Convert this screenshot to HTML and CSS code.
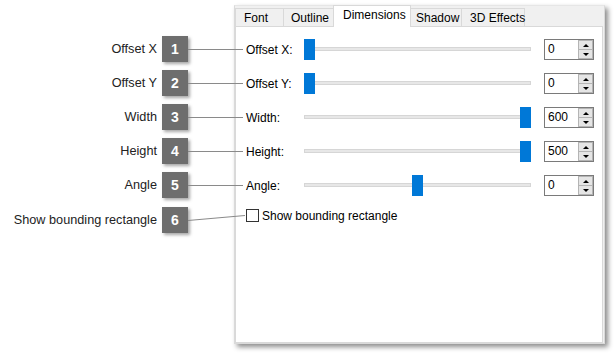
FILE: index.html
```html
<!DOCTYPE html>
<html lang="en">
<head>
    <meta charset="UTF-8">
    <title>Text Properties - Dimensions</title>
    <link rel="stylesheet" href="styles.css">
</head>
<body>
    <div class="page">
        <div class="callouts">
            <div class="callout">
                <span class="callout-label">Offset X</span>
                <span class="badge">1</span>
                <span class="leader"></span>
            </div>
            <div class="callout">
                <span class="callout-label">Offset Y</span>
                <span class="badge">2</span>
                <span class="leader"></span>
            </div>
            <div class="callout">
                <span class="callout-label">Width</span>
                <span class="badge">3</span>
                <span class="leader"></span>
            </div>
            <div class="callout">
                <span class="callout-label">Height</span>
                <span class="badge">4</span>
                <span class="leader"></span>
            </div>
            <div class="callout">
                <span class="callout-label">Angle</span>
                <span class="badge">5</span>
                <span class="leader"></span>
            </div>
            <div class="callout callout-last">
                <span class="callout-label">Show bounding rectangle</span>
                <span class="badge">6</span>
                <svg class="leader-slant" width="57" height="26" viewBox="0 0 57 26">
                    <line x1="0" y1="13.5" x2="57" y2="8.5" stroke="#8a8a8a" stroke-width="1"/>
                </svg>
            </div>
        </div>

        <div class="window">
            <div class="tabs">
                <div class="tab tab-font">Font</div>
                <div class="tab tab-outline">Outline</div>
                <div class="tab tab-dims active">Dimensions</div>
                <div class="tab tab-shadow">Shadow</div>
                <div class="tab tab-3d">3D Effects</div>
            </div>
            <div class="tab-panel">
                <div class="field">
                    <span class="field-label">Offset X:</span>
                    <div class="slider"><div class="track"></div><div class="thumb" style="left: 0px"></div></div>
                    <div class="spin"><span class="spin-value">0</span><div class="spin-btns"><span class="spin-up"></span><span class="spin-down"></span></div></div>
                </div>
                <div class="field">
                    <span class="field-label">Offset Y:</span>
                    <div class="slider"><div class="track"></div><div class="thumb" style="left: 0px"></div></div>
                    <div class="spin"><span class="spin-value">0</span><div class="spin-btns"><span class="spin-up"></span><span class="spin-down"></span></div></div>
                </div>
                <div class="field">
                    <span class="field-label">Width:</span>
                    <div class="slider"><div class="track"></div><div class="thumb" style="left: 216px"></div></div>
                    <div class="spin"><span class="spin-value">600</span><div class="spin-btns"><span class="spin-up"></span><span class="spin-down"></span></div></div>
                </div>
                <div class="field">
                    <span class="field-label">Height:</span>
                    <div class="slider"><div class="track"></div><div class="thumb" style="left: 216px"></div></div>
                    <div class="spin"><span class="spin-value">500</span><div class="spin-btns"><span class="spin-up"></span><span class="spin-down"></span></div></div>
                </div>
                <div class="field">
                    <span class="field-label">Angle:</span>
                    <div class="slider"><div class="track"></div><div class="thumb" style="left: 108px"></div></div>
                    <div class="spin"><span class="spin-value">0</span><div class="spin-btns"><span class="spin-up"></span><span class="spin-down"></span></div></div>
                </div>
                <label class="check">
                    <span class="check-box"></span>
                    <span>Show bounding rectangle</span>
                </label>
            </div>
        </div>
    </div>
</body>
</html>
```

FILE: styles.css
```css
body {
    margin: 0;
    background: #fff;
    font-family: "Liberation Sans", Arial, sans-serif;
}

.page {
    display: flex;
    align-items: flex-start;
    width: 616px;
    height: 353px;
}

/* callouts on the left */

.callouts {
    position: relative;
    z-index: 2;
    width: 243px;
    margin-right: -9px;
    padding-top: 36px;
    display: flex;
    flex-direction: column;
    gap: 8px;
}

.callout {
    display: flex;
    align-items: center;
    height: 26px;
}

.callout-last {
    margin-top: 1px;
}

.callout-label {
    flex: 0 0 157px;
    padding-right: 5px;
    text-align: right;
    font-size: 12.7px;
    color: #222;
    white-space: nowrap;
}

.badge {
    flex: 0 0 26px;
    height: 26px;
    background: #6e6e6e;
    color: #fff;
    font-weight: bold;
    font-size: 14px;
    display: flex;
    align-items: center;
    justify-content: center;
    box-shadow: 2px 2px 3px rgba(0, 0, 0, 0.35);
}

.leader {
    flex: 0 0 55px;
    height: 1px;
    background: #8a8a8a;
}

.leader-slant {
    flex: 0 0 57px;
    display: block;
}

/* dialog */

.window {
    margin-top: 5px;
    width: 369px;
    height: 337px;
    border: 1px solid #dadada;
    border-top-color: #e6e6e6;
    background: #f0f0f0;
    box-shadow: 3px 3px 5px rgba(0, 0, 0, 0.45);
    display: flex;
    flex-direction: column;
    font-size: 12px;
    color: #000;
}

.tabs {
    display: flex;
    align-items: flex-end;
    height: 21px;
    margin-top: -1px;
}

.tab {
    height: 18px;
    line-height: 18px;
    padding-left: 7px;
    box-sizing: border-box;
    border: 1px solid #d9d9d9;
    border-bottom: none;
    margin-right: -1px;
    background: #f0f0f0;
    white-space: nowrap;
}

.tab-font { width: 49px; padding-left: 8px; }
.tab-outline { width: 51px; }
.tab-dims { width: 78px; }
.tab-shadow { width: 52px; padding-left: 5px; }
.tab-3d { width: 64px; padding-left: 8px; }

.tab.active {
    position: relative;
    z-index: 1;
    height: 22px;
    line-height: 18px;
    background: #fff;
    margin-bottom: -1px;
    padding-left: 9px;
}

.tab-panel {
    flex: 1;
    background: #fff;
    border: 1px solid #d9d9d9;
    margin-right: 1px;
    padding: 12px 0 0 10px;
}

.field {
    display: flex;
    align-items: center;
    height: 21px;
    margin-bottom: 13px;
}

.field-label {
    flex: 0 0 58px;
}

.slider {
    position: relative;
    flex: 0 0 227px;
    height: 21px;
    margin-right: 13px;
}

.track {
    position: absolute;
    left: 0;
    right: 0;
    top: 8px;
    height: 2px;
    background: #e7e7e7;
    border: 1px solid #d6d6d6;
}

.thumb {
    position: absolute;
    top: 0;
    width: 11px;
    height: 21px;
    background: #0078d7;
}

.spin {
    display: flex;
    width: 50px;
    height: 21px;
    box-sizing: border-box;
    border: 1px solid #7a7a7a;
    background: #fff;
}

.spin-value {
    flex: 1;
    padding-left: 3px;
    line-height: 19px;
}

.spin-btns {
    display: flex;
    flex-direction: column;
    width: 15px;
}

.spin-up,
.spin-down {
    flex: 1;
    position: relative;
    background: #e5e5e5;
    border: 1px solid #b4b4b4;
    box-sizing: border-box;
}

.spin-down {
    margin-top: -1px;
}

.spin-up::after,
.spin-down::after {
    content: "";
    position: absolute;
    left: 4px;
    top: 3px;
    border-left: 3px solid transparent;
    border-right: 3px solid transparent;
}

.spin-up::after {
    border-bottom: 3px solid #000;
}

.spin-down::after {
    border-top: 3px solid #000;
}

.check {
    display: flex;
    align-items: center;
    height: 13px;
}

.check-box {
    width: 13px;
    height: 13px;
    box-sizing: border-box;
    border: 1px solid #333;
    margin-right: 3px;
}
```
